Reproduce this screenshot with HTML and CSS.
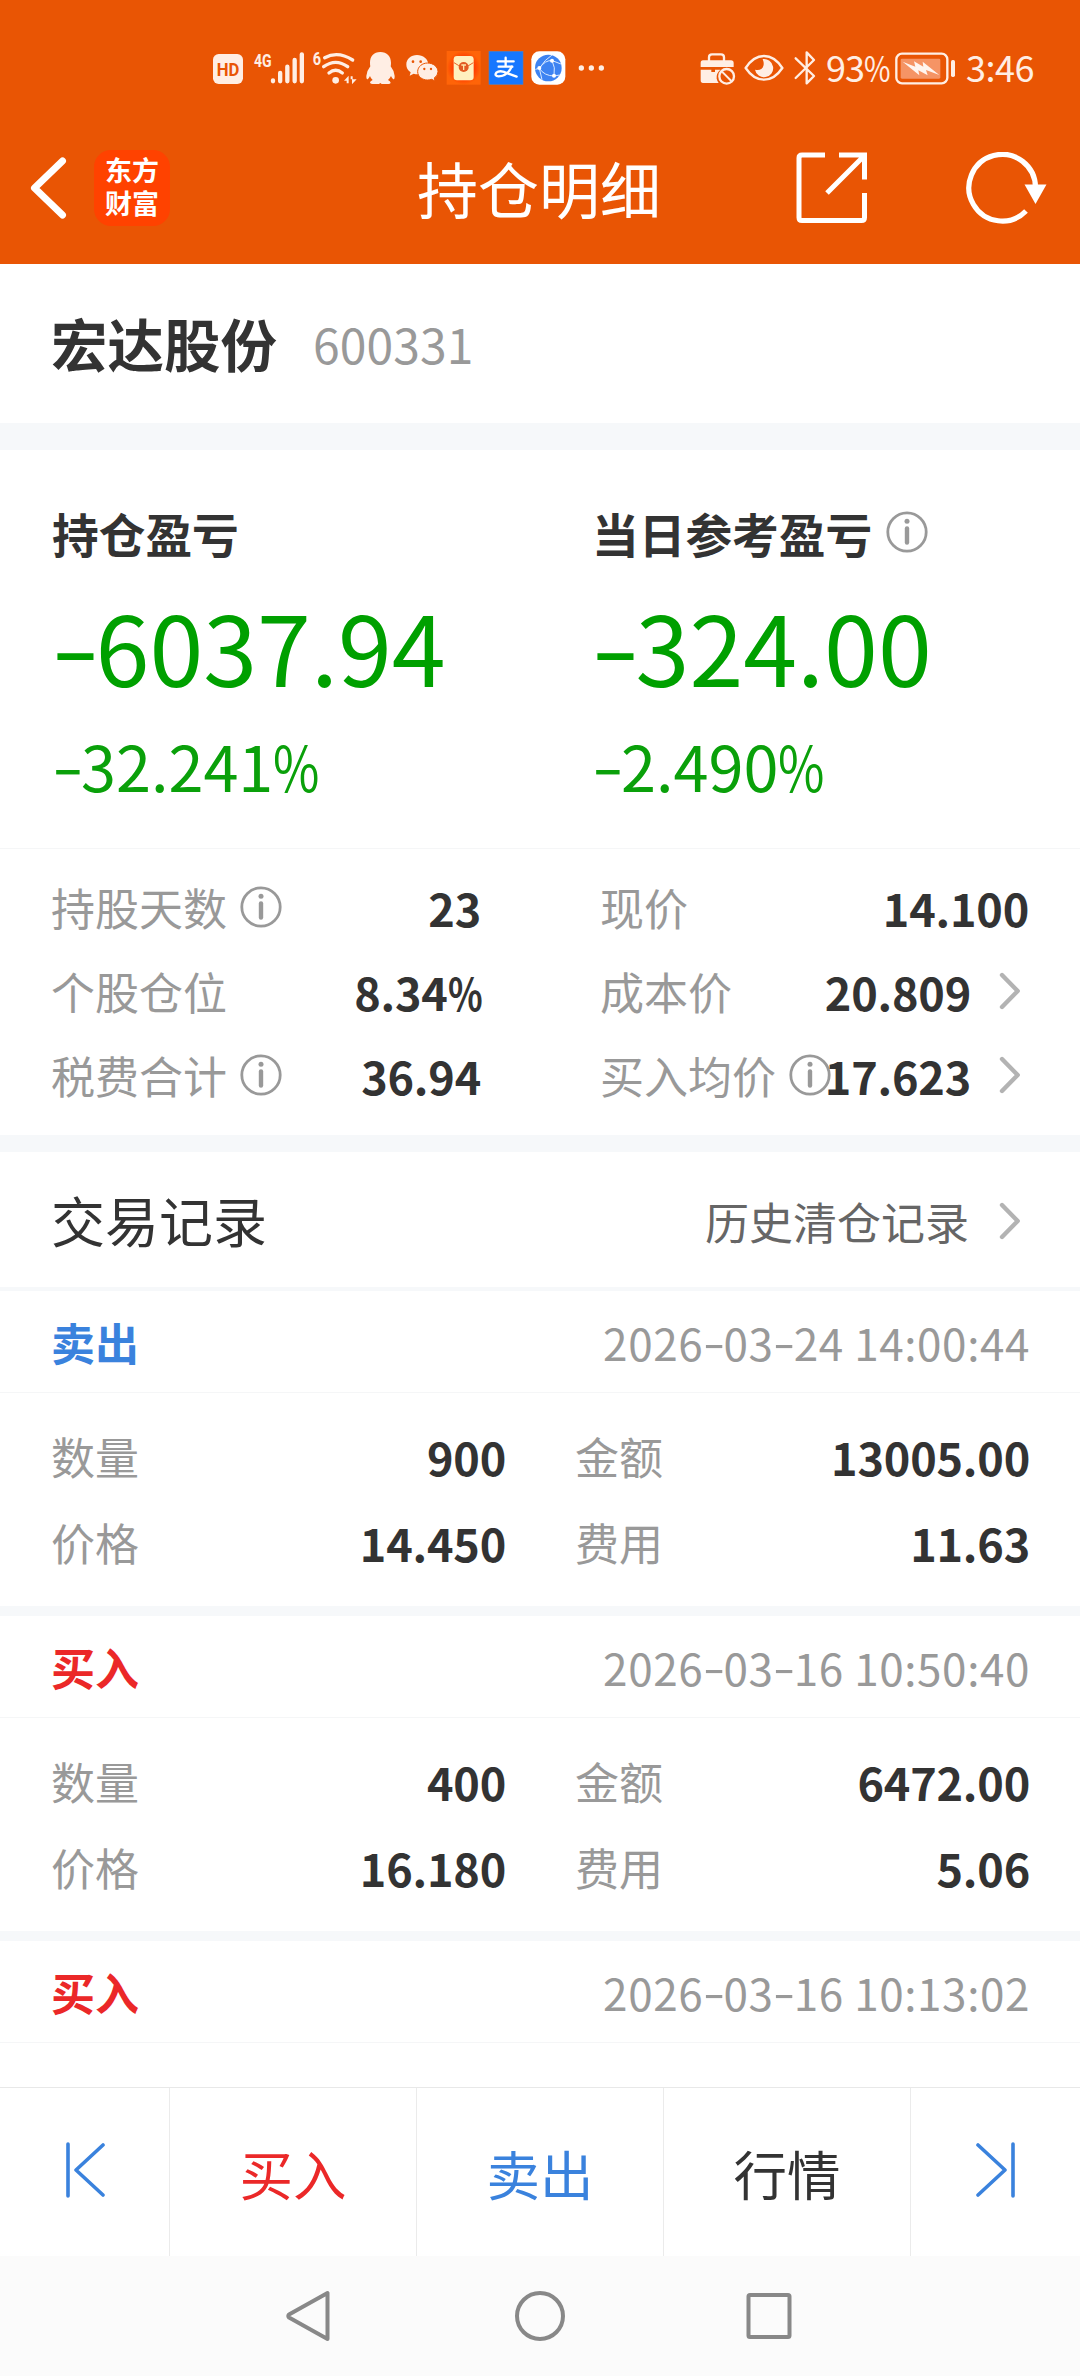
FILE: index.html
```html
<!DOCTYPE html>
<html lang="zh-CN">
<head>
<meta charset="utf-8">
<title>持仓明细</title>
<link rel="stylesheet" href="styles.css">
</head>
<body>
<svg class="defs" width="0" height="0">
  <symbol id="info" viewBox="0 0 42 42">
    <circle cx="21" cy="21" r="19.2" fill="none" stroke="#999" stroke-width="2.8"/>
    <circle cx="21" cy="10.2" r="2.5" fill="#999"/>
    <path d="M21 17.5V31.5" stroke="#999" stroke-width="4.4" stroke-linecap="round"/>
  </symbol>
  <symbol id="chevron" viewBox="0 0 22 38">
    <path d="M3 3L18.7 19L3 35" fill="none" stroke="#b3b3b3" stroke-width="4.4" stroke-linecap="round" stroke-linejoin="round"/>
  </symbol>
</svg>

<div class="top">
  <div class="status">
    <div class="status-left">
      <svg width="46.67" height="60" viewBox="0 0 140 180"><rect x="39" y="42" width="90" height="90" rx="17" fill="#ffeee4"/><text x="84" y="107" class="hd" text-anchor="middle" textLength="68" lengthAdjust="spacingAndGlyphs">HD</text></svg>
      <svg width="63.33" height="60" viewBox="140 0 190 180"><text x="161" y="80" class="net" textLength="53" lengthAdjust="spacingAndGlyphs">4G</text><path d="M218 124V121M239.500 124V99M261 124V80M283 124V60M304.500 124V43" stroke="#ffeee4" stroke-width="13" stroke-linecap="round"/></svg>
      <svg width="51.67" height="60" viewBox="330 0 155 180"><text x="338" y="75" class="net" textLength="25" lengthAdjust="spacingAndGlyphs">6</text><g fill="none" stroke="#ffeee4" stroke-width="10" stroke-linecap="round"><path d="M374 53Q414 32 458 60"/><path d="M371 80Q407 54 443 80"/><path d="M387 99Q407 83 427 99"/></g><circle cx="407" cy="121" r="10" fill="#ffeee4"/><path d="M432 122L446 107V130H440V122ZM452 109H458V118H470L456 133V118H452Z" fill="#ffeee4"/></svg>
      <svg width="38.33" height="60" viewBox="485 0 115 180"><path d="M540 36C520 36 509 49 509 68Q509 75 510 79Q499 93 498 108Q498 121 503 117Q507 113 509 108Q511 115 517 120Q509 123 509 128Q510 132 522 132H536L540 129L544 132H560Q571 132 571 128Q570 123 563 120Q569 115 572 108Q574 113 578 117Q583 121 583 108Q582 93 571 79Q572 75 572 68C572 49 560 36 540 36Z" fill="#ffeee4"/></svg>
      <svg width="43.33" height="60" viewBox="600 0 130 180"><path d="M651 45C633 45 619 57 619 74Q619 88 632 97L629 107L641 101Q647 103 653 103C671 103 685 90 685 74C685 57 669 45 651 45Z" fill="#ffeee4"/><path d="M683 69C667 69 653 80 653 95C653 110 667 120 683 120Q690 120 695 118L705 123L703 114Q714 106 714 95C714 80 699 69 683 69Z" fill="#ffeee4" stroke="#e95504" stroke-width="3"/><g fill="#e95504"><circle cx="639" cy="65" r="4"/><circle cx="662" cy="65" r="4"/><circle cx="673" cy="87" r="3.500"/><circle cx="693" cy="87" r="3.500"/></g></svg>
      <svg width="41.67" height="60" viewBox="730 0 125 180"><defs><radialGradient id="glow"><stop offset="0.6" stop-color="#ff3b00"/><stop offset="1" stop-color="#ff6408"/></radialGradient></defs><rect x="741" y="33" width="102" height="101" fill="url(#glow)"/><rect x="762" y="48" width="60" height="73" rx="10" fill="#fff0bf"/><path d="M763 68Q776 79 792 80Q808 79 821 68" fill="none" stroke="#e8632b" stroke-width="3"/><circle cx="792" cy="81" r="15" fill="#e25b24"/><path d="M785 75H799M792 75V90" stroke="#ffe7a8" stroke-width="4"/></svg>
      <svg width="41.67" height="60" viewBox="855 0 125 180"><rect x="867" y="34" width="102" height="99" fill="#1677ff" stroke="#5080c0" stroke-width="2"/><g fill="none" stroke="#fff" stroke-linecap="round"><path d="M893 64H941M917 53V78M896 80H937" stroke-width="7"/><path d="M935 80Q922 108 896 109Q882 107 889 98Q901 88 925 101L950 110" stroke-width="7"/></g></svg>
      <svg width="43.33" height="60" viewBox="980 0 130 180"><rect x="993" y="34" width="102" height="100" rx="24" fill="#fff"/><circle cx="1044" cy="84" r="40" fill="#3d83f2"/><g fill="none" stroke="#d9eaff" stroke-width="3"><path d="M1055 45Q1034 58 1017 85Q1032 108 1062 108M1055 61Q1066 82 1061 108M1017 85Q1035 59 1056 62M1005 88L1017 85L1025 119M1056 62L1082 72M1062 108L1078 105"/></g><g fill="#fff"><circle cx="1055" cy="62" r="6"/><circle cx="1017" cy="84" r="6"/><circle cx="1061" cy="107" r="6"/></g></svg>
      <svg width="50" height="60" viewBox="1110 0 150 180"><g fill="#ffeee4"><circle cx="1144" cy="84" r="8"/><circle cx="1174" cy="84" r="8"/><circle cx="1204" cy="84" r="8"/></g></svg>
    </div>
    <div class="status-right">
      <svg width="60" height="60" viewBox="0 0 180 180"><path d="M87 63V52Q87 43 96 43H123Q132 43 132 52V63" fill="none" stroke="#ffeee4" stroke-width="7"/><path d="M69 61H153Q161 61 161 69V81H62V69Q62 61 69 61ZM62 89H94V96H105V89H121Q108 100 110 116Q112 124 116 129H69Q62 129 62 121Z" fill="#ffeee4"/><circle cx="140" cy="109" r="22" fill="none" stroke="#ffeee4" stroke-width="7"/><path d="M126 95L154 123" stroke="#ffeee4" stroke-width="6"/></svg>
      <svg width="50" height="60" viewBox="180 0 150 180"><path d="M197 84Q220 48 252 48T307 84Q284 119 252 119T197 84Z" fill="none" stroke="#ffeee4" stroke-width="7"/><path d="M248 57A27.500 27.500 0 1 1 225 89Q236 92 244 87Q256 78 248 57Z" fill="#ffeee4"/></svg>
      <svg width="36" height="60" viewBox="330 0 108 180"><path d="M347 55L402 108L380 130V37L402 60L347 114" fill="none" stroke="#ffeee4" stroke-width="7" stroke-linejoin="round" stroke-linecap="round"/></svg>
      <span class="battery-text">93<i class="pct">%</i></span>
      <svg width="66" height="60" viewBox="640 0 198 180"><rect x="650" y="41" width="153" height="89" rx="17" fill="none" stroke="#ffeee4" stroke-width="7"/><rect x="663" y="56" width="119" height="60" rx="4" fill="#f59465"/><path d="M669 65L707 80L703 64L731 80L729 65L779 105L739 90L744 106L716 91L719 106Z" fill="#fff5ef"/><rect x="814" y="60" width="12" height="51" rx="5" fill="#ffeee4"/></svg>
      <span class="clock">3:46</span>
    </div>
  </div>
  <header class="header">
    <div class="head-left">
      <svg width="40" height="66" viewBox="0 0 40 66"><path d="M34.500 6L6.500 33L34.500 60" fill="none" stroke="#fff" stroke-width="7" stroke-linecap="round" stroke-linejoin="round"/></svg>
      <div class="logo"><span>东方</span><span>财富</span></div>
    </div>
    <h1 class="title">持仓明细</h1>
    <div class="head-right">
      <svg width="72" height="72" viewBox="0 0 72 72"><path d="M29 3H6Q3 3 3 6V65.500Q3 68.500 6 68.500H65.500Q68.500 68.500 68.500 65.500V41" fill="none" stroke="#fff" stroke-width="5"/><path d="M43 3H68.500V27.500M68 4L31 41" fill="none" stroke="#fff" stroke-width="5"/></svg>
      <svg width="82" height="72" viewBox="0 0 82 72"><path d="M69.500 36A33.300 33.300 0 1 0 60 59" fill="none" stroke="#fff" stroke-width="5.200"/><path d="M58.500 32.500H80.500L69.500 52Z" fill="#fff"/></svg>
    </div>
  </header>
</div>

<section class="stock"><span class="stock-name">宏达股份</span><span class="stock-code">600331</span></section>

<section class="pnl">
  <div>
    <div class="pnl-title">持仓盈亏</div>
    <div class="pnl-value"><i class="minus">-</i>6037.94</div>
    <div class="pnl-rate"><i class="minus">-</i>32.241<i class="pct">%</i></div>
  </div>
  <div>
    <div class="pnl-title">当日参考盈亏<svg class="info"><use href="#info"/></svg></div>
    <div class="pnl-value"><i class="minus">-</i>324.00</div>
    <div class="pnl-rate"><i class="minus">-</i>2.490<i class="pct">%</i></div>
  </div>
</section>

<section class="facts">
  <div class="facts-left">
    <div class="row"><span>持股天数</span><svg class="info"><use href="#info"/></svg><b>23</b></div>
    <div class="row"><span>个股仓位</span><b>8.34<i class="pct">%</i></b></div>
    <div class="row"><span>税费合计</span><svg class="info"><use href="#info"/></svg><b>36.94</b></div>
  </div>
  <div class="facts-right">
    <div class="row"><span>现价</span><b>14.100</b></div>
    <div class="row"><span>成本价</span><b>20.809</b><svg class="chevron"><use href="#chevron"/></svg></div>
    <div class="row"><span>买入均价</span><svg class="info under"><use href="#info"/></svg><b>17.623</b><svg class="chevron"><use href="#chevron"/></svg></div>
  </div>
</section>

<section class="records-head"><h2>交易记录</h2><a>历史清仓记录</a><svg class="chevron"><use href="#chevron"/></svg></section>

<main class="records">
  <article class="record">
    <div class="record-head"><span class="side sell">卖出</span><time>2026<i class="minus">-</i>03<i class="minus">-</i>24 14:00:44</time></div>
    <div class="record-body">
      <div class="row"><span>数量</span><b>900</b></div>
      <div class="row"><span>金额</span><b>13005.00</b></div>
      <div class="row"><span>价格</span><b>14.450</b></div>
      <div class="row"><span>费用</span><b>11.63</b></div>
    </div>
  </article>
  <article class="record">
    <div class="record-head"><span class="side buy">买入</span><time>2026<i class="minus">-</i>03<i class="minus">-</i>16 10:50:40</time></div>
    <div class="record-body">
      <div class="row"><span>数量</span><b>400</b></div>
      <div class="row"><span>金额</span><b>6472.00</b></div>
      <div class="row"><span>价格</span><b>16.180</b></div>
      <div class="row"><span>费用</span><b>5.06</b></div>
    </div>
  </article>
  <article class="record">
    <div class="record-head"><span class="side buy">买入</span><time>2026<i class="minus">-</i>03<i class="minus">-</i>16 10:13:02</time></div>
  </article>
</main>

<footer class="actions">
  <div class="step"><svg width="40" height="56" viewBox="0 0 40 56"><path d="M3 2V54M38 3L11 28L38 53" fill="none" stroke="#3a82dd" stroke-width="3.600" stroke-linecap="round" stroke-linejoin="round"/></svg></div>
  <div class="buy">买入</div>
  <div class="sell">卖出</div>
  <div>行情</div>
  <div class="step"><svg width="40" height="56" viewBox="0 0 40 56"><path d="M37 2V54M2 3L29 28L2 53" fill="none" stroke="#3a82dd" stroke-width="3.600" stroke-linecap="round" stroke-linejoin="round"/></svg></div>
</footer>

<nav class="sysnav">
  <svg width="46" height="52" viewBox="0 0 46 52"><path d="M41.500 3V49L3 27.500Q1.500 26 3 24.500Z" fill="none" stroke="#888" stroke-width="4" stroke-linejoin="round"/></svg>
  <svg width="52" height="52" viewBox="0 0 52 52"><circle cx="26" cy="26" r="23" fill="none" stroke="#888" stroke-width="4"/></svg>
  <svg class="recent" width="46" height="52" viewBox="0 0 46 52"><rect x="2.500" y="5" width="41" height="42" rx="1.500" fill="none" stroke="#888" stroke-width="4"/></svg>
</nav>
</body>
</html>
```
FILE: styles.css
```css
* { box-sizing: border-box; margin: 0; padding: 0; }

body {
  width: 1080px;
  height: 2376px;
  overflow: hidden;
  display: flex;
  flex-direction: column;
  background: #fff;
  color: #333;
  font-family: "Noto Sans CJK SC", sans-serif;
  font-size: 44px;
}

svg { display: block; flex: none; }
.defs { position: absolute; }
b { font-weight: 700; }

/* wide dash and narrow percent sign of the numeric style */
.minus { display: inline-block; width: 0.46em; font-style: normal; transform: translateY(-0.035em) scaleX(1.45); transform-origin: 0 50%; }
.pct { display: inline-block; width: 0.74em; font-style: normal; transform: scaleX(0.8); transform-origin: 0 50%; }

.top { height: 264px; background: #e95504; color: #fff; flex: none; }

.status {
  height: 108px;
  padding: 40px 0 0 200px;
  display: flex;
  color: #ffeee4;
}
.status-left, .status-right { display: flex; height: 60px; }
.status-left { width: 480px; }
.status-right { align-items: center; }
.hd { font: 700 54px "Roboto", sans-serif; fill: #e95504; }
.net { font: 700 54px "Roboto", sans-serif; fill: #ffeee4; }
.battery-text, .clock { font-size: 36px; line-height: 53px; height: 60px; white-space: nowrap; }
.battery-text { width: 67px; letter-spacing: -1px; }
.clock { margin-left: 7px; letter-spacing: -0.5px; }

.header {
  height: 156px;
  padding: 3px 32px 0 28px;
  display: grid;
  grid-template-columns: 1fr auto 1fr;
  align-items: center;
}
.head-left { display: flex; align-items: center; gap: 26px; }
.logo {
  width: 76px;
  height: 76px;
  border-radius: 17px;
  background: #ff4200;
  display: flex;
  flex-direction: column;
  align-items: center;
  justify-content: center;
  padding-bottom: 4px;
  font-size: 27px;
  font-weight: 700;
  line-height: 33px;
}
.title { padding-left: 2px; font-size: 61px; font-weight: 400; line-height: 80px; }
.head-right { display: flex; justify-content: flex-end; gap: 98px; }

.stock {
  height: 159px;
  padding: 0 51px 3px;
  display: flex;
  align-items: center;
  gap: 36px;
  flex: none;
}
.stock-name { font-size: 56.5px; font-weight: 700; }
.stock-code { font-size: 48px; color: #999; letter-spacing: 0.1px; padding-top: 1px; }

.pnl {
  height: 426px;
  padding: 52px 0 0 52px;
  border-top: 27px solid #f6f8fa;
  border-bottom: 1px solid #f5f6f7;
  display: grid;
  grid-template-columns: 540px 1fr;
  flex: none;
}
.pnl-title { height: 60px; display: flex; align-items: center; gap: 14px; font-size: 46.7px; font-weight: 700; }
.pnl-value { margin-top: 23px; margin-left: -1px; font-size: 97px; line-height: 120px; color: #00a000; }
.pnl-rate { margin-top: 20px; font-size: 63px; line-height: 80px; color: #0aa00a; }

.info { width: 42px; height: 42px; }
.chevron { width: 22px; height: 38px; }

.facts {
  height: 303px;
  padding: 16px 51px 0;
  border-bottom: 17px solid #f6f8fa;
  display: grid;
  grid-template-columns: 430px 429px;
  justify-content: space-between;
  flex: none;
}
.row { display: flex; align-items: center; color: #999; white-space: nowrap; }
.row b { margin-left: auto; color: #333; font-size: 45px; letter-spacing: -0.2px; }
.facts .row { height: 84px; }
.row .info { margin-left: 13px; }
.row .under { margin-right: -12px; }
.row .chevron { margin: 0 8px 0 28px; }

.records-head {
  height: 139px;
  padding: 0 59px 0 51px;
  border-bottom: 4px solid #f6f8fa;
  display: flex;
  align-items: center;
  flex: none;
}
.records-head h2 { margin-right: auto; font-size: 54px; font-weight: 400; line-height: 70px; }
.records-head a { color: #666; padding-top: 2px; }
.records-head .chevron { margin-left: 30px; margin-top: 2px; }

.records { height: 796px; overflow: hidden; flex: none; }
.record { border-bottom: 10px solid #f6f8fa; }
.record:last-child { border-bottom: 0; }
.record-head {
  height: 102px;
  padding: 0 50px 0 51px;
  border-bottom: 1px solid #f5f6f7;
  display: flex;
  align-items: center;
  justify-content: space-between;
}
.record-head time { color: #999; letter-spacing: 0.6px; }
.side { font-weight: 700; }
.sell { color: #3a82dd; }
.buy { color: #eb2828; }
.record-body {
  height: 213px;
  padding: 20px 50px 0 51px;
  display: grid;
  grid-template-columns: 455px 455px;
  grid-auto-rows: 86px;
  justify-content: space-between;
}

.actions {
  height: 169px;
  border-top: 1px solid #e8e8e8;
  display: grid;
  grid-template-columns: 170px 1fr 1fr 1fr 169px;
  font-size: 53.5px;
  flex: none;
}
.actions > div { display: flex; align-items: center; justify-content: center; border-right: 1px solid #ebebeb; }
.actions > div:last-child { border-right: 0; }
.step svg { margin-bottom: 5px; }

.sysnav {
  height: 120px;
  padding-bottom: 1px;
  background: #fbfbfb;
  display: flex;
  align-items: center;
  justify-content: center;
  gap: 182px;
  flex: none;
}
.recent { margin: 0 2px 0 -2px; }
```
